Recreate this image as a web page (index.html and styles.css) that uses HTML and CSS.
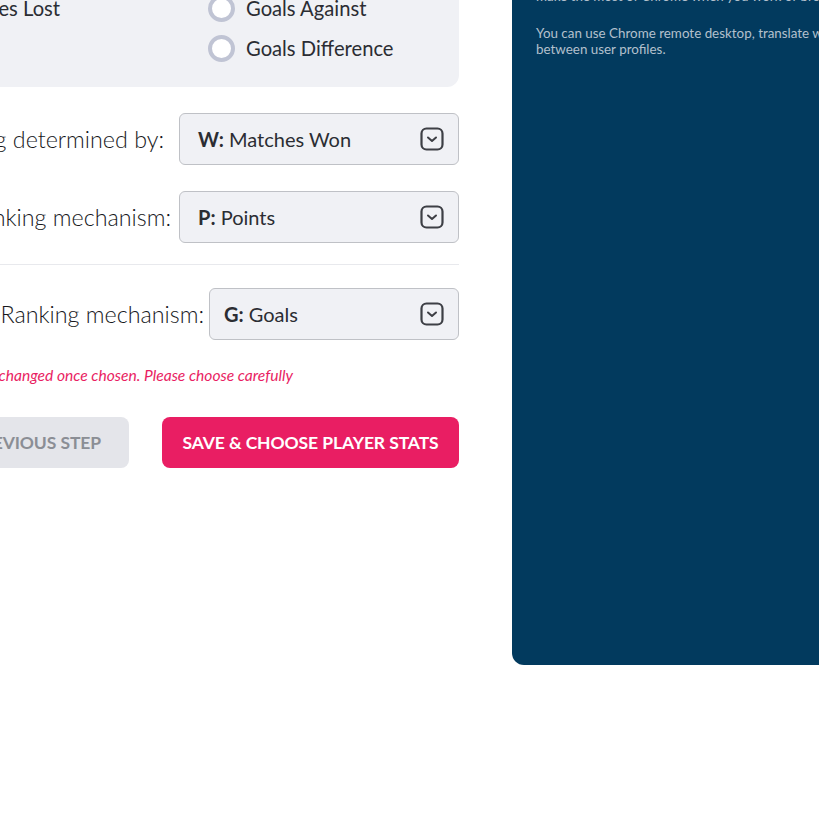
FILE: index.html
```html
<!DOCTYPE html>
<html>
<head>
<meta charset="utf-8">
<link rel="stylesheet" href="styles.css">
</head>
<body>
<div class="page">
  <div class="main">
    <div class="stat-box">
      <div class="radio-col left">
        <label class="radio-row"><span class="radio"></span>Matches Won</label>
        <label class="radio-row"><span class="radio"></span>Matches Lost</label>
      </div>
      <div class="radio-col">
        <label class="radio-row"><span class="radio"></span>Goals For</label>
        <label class="radio-row"><span class="radio"></span>Goals Against</label>
        <label class="radio-row"><span class="radio"></span>Goals Difference</label>
      </div>
    </div>

    <div class="field-row row-1">
      <span class="field-label">Team ranking determined by:</span>
      <div class="select wide">
        <span class="select-value"><b>W:</b> Matches Won</span>
        <svg class="chev" width="24" height="24" viewBox="0 0 24 24"><rect x="1.5" y="1.5" width="21" height="21" rx="5" fill="none" stroke="#3d3f45" stroke-width="2.2"/><path d="M8 10.5l4 3.5 4-3.5" fill="none" stroke="#3d3f45" stroke-width="2" stroke-linecap="round" stroke-linejoin="round"/></svg>
      </div>
    </div>

    <div class="field-row row-2">
      <span class="field-label">Primary ranking mechanism:</span>
      <div class="select wide">
        <span class="select-value"><b>P:</b> Points</span>
        <svg class="chev" width="24" height="24" viewBox="0 0 24 24"><rect x="1.5" y="1.5" width="21" height="21" rx="5" fill="none" stroke="#3d3f45" stroke-width="2.2"/><path d="M8 10.5l4 3.5 4-3.5" fill="none" stroke="#3d3f45" stroke-width="2" stroke-linecap="round" stroke-linejoin="round"/></svg>
      </div>
    </div>

    <hr class="divider">

    <div class="field-row row-3">
      <span class="field-label">Secondary Ranking mechanism:</span>
      <div class="select narrow">
        <span class="select-value"><b>G:</b> Goals</span>
        <svg class="chev" width="24" height="24" viewBox="0 0 24 24"><rect x="1.5" y="1.5" width="21" height="21" rx="5" fill="none" stroke="#3d3f45" stroke-width="2.2"/><path d="M8 10.5l4 3.5 4-3.5" fill="none" stroke="#3d3f45" stroke-width="2" stroke-linecap="round" stroke-linejoin="round"/></svg>
      </div>
    </div>

    <p class="warning">Note: ranking mechanisms cannot be changed once chosen. Please choose carefully</p>

    <div class="actions">
      <button class="btn btn-prev">PREVIOUS STEP</button>
      <button class="btn btn-save">SAVE &amp; CHOOSE PLAYER STATS</button>
    </div>
  </div>

  <aside class="side-panel">
    <p>Chrome profiles let you keep your work and personal browsing separate, so you can<br>make the most of Chrome when you work or browse from any device.</p>
    <p>You can use Chrome remote desktop, translate web pages and switch<br>between user profiles.</p>
  </aside>
</div>
</body>
</html>
```

FILE: styles.css
```css
html, body {
  margin: 0;
  padding: 0;
  background: #ffffff;
  overflow: hidden;
  width: 819px;
  height: 819px;
}

body {
  font-family: "Lato", "Liberation Sans", sans-serif;
  color: #2b2d33;
}

.page {
  display: flex;
  align-items: flex-start;
  gap: 53px;
  margin-left: -400px;
  margin-top: -71px;
  width: 1500px;
}

.main {
  width: 859px;
  flex: none;
  display: flex;
  flex-direction: column;
}

.stat-box {
  background: #f0f1f5;
  border-radius: 0 0 12px 12px;
  padding: 19px 25px 19px 24px;
  display: flex;
  justify-content: flex-end;
  gap: 78px;
}

.radio-col {
  display: flex;
  flex-direction: column;
  width: 226px;
}

.radio-row {
  height: 40px;
  display: flex;
  align-items: center;
  gap: 11px;
  font-size: 20.2px;
  color: #2b2d33;
  white-space: nowrap;
}

.radio {
  width: 19px;
  height: 19px;
  border-radius: 50%;
  border: 4px solid #c0c4d4;
  background: #ffffff;
  flex: none;
}

.field-row {
  display: flex;
  justify-content: flex-end;
  align-items: center;
}

.row-1 { margin-top: 26px; gap: 15px; }
.row-2 { margin-top: 26px; gap: 8px; }
.row-3 { margin-top: 23px; gap: 5px; }

.field-label {
  font-size: 23.3px;
  font-weight: 300;
  color: #17181c;
  white-space: nowrap;
}

.select {
  box-sizing: border-box;
  border: 1px solid #bfc1c6;
  border-radius: 6px;
  background: #f0f1f5;
  display: flex;
  align-items: center;
  justify-content: space-between;
  padding: 0 14px 0 18px;
}

.select.wide { width: 280px; height: 52px; }
.select.narrow { width: 250px; height: 52px; padding-left: 14px; }

.select-value {
  font-size: 20px;
  color: #2b2d33;
  white-space: nowrap;
}

.select-value b {
  font-weight: 700;
}

.chev { flex: none; }

.divider {
  border: 0;
  border-top: 1px solid #e8e9ed;
  margin: 21px 0 0 0;
}

.warning {
  margin: 26px 0 0 0;
  font-size: 15.6px;
  line-height: 18px;
  font-style: italic;
  color: #e91e63;
  text-align: right;
  padding-right: 166px;
  white-space: nowrap;
}

.actions {
  margin-top: 33px;
  display: flex;
  justify-content: flex-end;
  gap: 33px;
}

.btn {
  height: 51px;
  border: 0;
  border-radius: 8px;
  font-family: "Lato", "Liberation Sans", sans-serif;
  font-weight: 700;
  font-size: 17.5px;
  letter-spacing: -0.1px;
  padding: 0;
  white-space: nowrap;
  cursor: pointer;
}

.btn-prev {
  background: #e4e5ea;
  color: #8b8e95;
  width: 250px;
  text-align: right;
  padding-right: 28px;
}

.btn-save {
  background: #e91e63;
  color: #ffffff;
  width: 297px;
  text-align: center;
}

.side-panel {
  flex: none;
  width: 520px;
  height: 736px;
  box-sizing: border-box;
  background: #023a5e;
  border-radius: 0 0 0 12px;
  padding: 43px 24px;
  color: #b3c0cd;
  font-size: 13.4px;
  line-height: 16px;
  white-space: nowrap;
}

.side-panel p {
  margin: 0 0 21px 0;
}
```
